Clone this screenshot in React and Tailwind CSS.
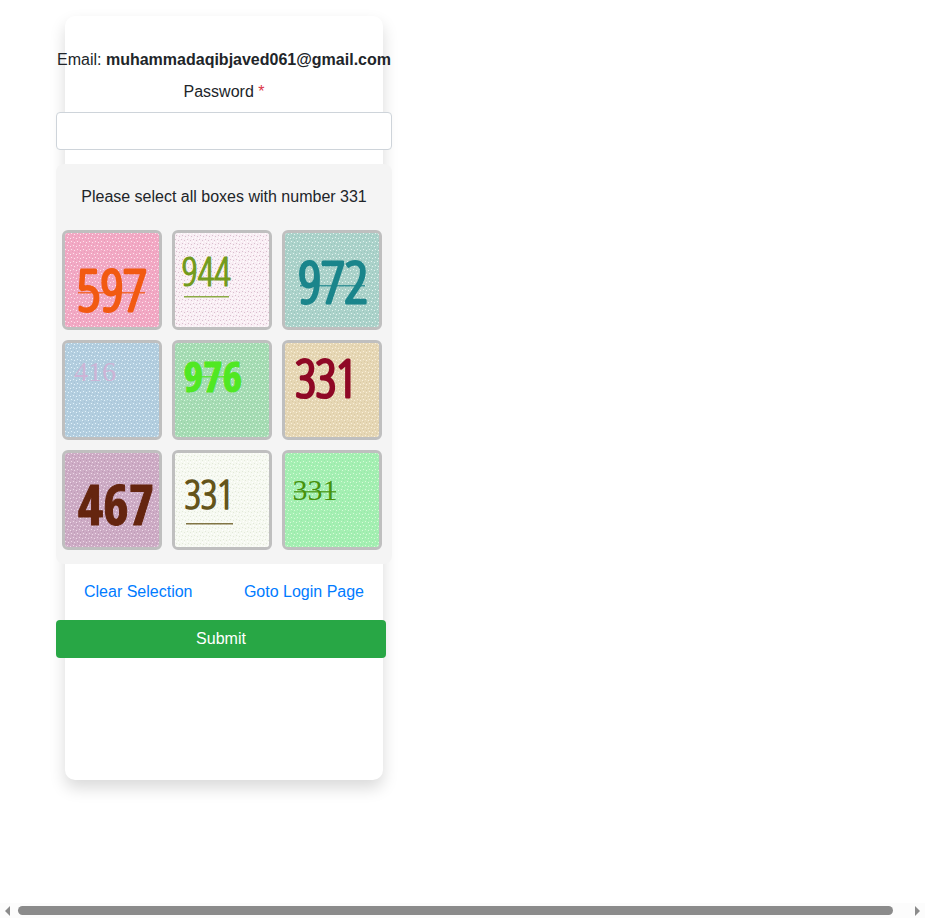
import React, { useState } from "react";

const LIGHT = '"Open Sans Condensed Light", "Roboto Condensed", "Liberation Sans Narrow", "DejaVu Sans Condensed", sans-serif';
const HEAVY = '"Open Sans Condensed", "Liberation Sans Narrow", "DejaVu Sans Condensed", sans-serif';
const SERIF = '"Liberation Serif", serif';

const TILES = [
  { id: "a", value: "597", bg: "#f2a9c4", dot: "#fde3ee", shade: "#e99cbb", ink: "#f25a12", x: 47, y: 78, size: 58, font: LIGHT, weight: 400, stroke: 3, line: [13, 59, 80] },
  { id: "b", value: "944", bg: "#f9eef4", dot: "#ffffff", shade: "#d9bfce", ink: "#739b1c", x: 31, y: 53, size: 41, font: LIGHT, weight: 400, stroke: 1.2, line: [9, 63, 54] },
  { id: "c", value: "972", bg: "#abd2ca", dot: "#e2f3ee", shade: "#9bc6bd", ink: "#1a858b", x: 48, y: 70, size: 58, font: LIGHT, weight: 400, stroke: 3, line: [15, 52, 80] },
  { id: "d", value: "416", bg: "#b3cedf", dot: "#e2f2fb", shade: "#a6c3d8", ink: "#cdb4d6", x: 30, y: 38, size: 28, font: SERIF, weight: 400, stroke: 0 },
  { id: "e", value: "976", bg: "#a6dcb4", dot: "#d9f6e0", shade: "#98d0a8", ink: "#50e822", x: 38, y: 49, size: 42, font: HEAVY, weight: 700, stroke: 1, line: [11, 33, 62] },
  { id: "f", value: "331", bg: "#e6d7b5", dot: "#faf0d9", shade: "#dacaa3", ink: "#8f0825", x: 41, y: 54, size: 51, font: LIGHT, weight: 400, stroke: 3 },
  { id: "g", value: "467", bg: "#cdacc5", dot: "#efd9e9", shade: "#c09ab8", ink: "#65250f", x: 51, y: 72, size: 55, font: HEAVY, weight: 700, stroke: 1 },
  { id: "h", value: "331", bg: "#f6f9f1", dot: "#ffffff", shade: "#e2e8da", ink: "#64541a", x: 34, y: 56, size: 41, font: LIGHT, weight: 400, stroke: 1.6, line: [11, 70, 58] },
  { id: "i", value: "331", bg: "#a4efb2", dot: "#d6fbd8", shade: "#98e8aa", ink: "#46920c", x: 30, y: 47, size: 30, font: SERIF, weight: 400, stroke: 0, line: [9, 38, 51] },
];

function NumberTile({ tile, selected, onToggle }) {
  const patternId = `grain-${tile.id}`;
  return (
    <button
      type="button"
      aria-pressed={selected}
      onClick={onToggle}
      className={`size-[100px] cursor-pointer overflow-hidden rounded-md border-3 ${
        selected ? "border-[#28a745]" : "border-[#bfbfbf]"
      }`}
    >
      <svg viewBox="0 0 94 94" className="block size-full">
        <defs>
          <pattern id={patternId} width="6" height="8" patternUnits="userSpaceOnUse">
            <rect width="6" height="8" fill={tile.bg} />
            <rect x="0" y="0" width="1" height="1" fill={tile.dot} />
            <rect x="3" y="1" width="1" height="1" fill={tile.dot} />
            <rect x="1" y="2" width="1" height="1" fill={tile.shade} />
            <rect x="4" y="3" width="1" height="1" fill={tile.shade} />
            <rect x="2" y="4" width="1" height="1" fill={tile.dot} />
            <rect x="5" y="5" width="1" height="1" fill={tile.dot} />
            <rect x="0" y="6" width="1" height="1" fill={tile.shade} />
            <rect x="3" y="7" width="1" height="1" fill={tile.shade} />
          </pattern>
        </defs>
        <rect width="94" height="94" fill={`url(#${patternId})`} />
        {tile.line && (
          <rect x={tile.line[0]} y={tile.line[1]} width={tile.line[2] - tile.line[0]} height="1.5" fill={tile.ink} opacity="0.8" />
        )}
        <text
          x={tile.x}
          y={tile.y}
          fill={tile.ink}
          stroke={tile.ink}
          strokeWidth={tile.stroke}
          strokeLinejoin="round"
          fontSize={tile.size}
          fontFamily={tile.font}
          fontWeight={tile.weight}
          textAnchor="middle"
        >
          {tile.value}
        </text>
      </svg>
    </button>
  );
}

export default function App() {
  const [selected, setSelected] = useState([]);
  const toggle = (id) =>
    setSelected((list) => (list.includes(id) ? list.filter((v) => v !== id) : [...list, id]));

  return (
    <div className="flex min-h-screen flex-col overflow-hidden bg-white font-['Liberation_Sans',Arial,sans-serif] text-base text-[#212529]">
      <main className="flex-1 px-[65px] pt-4">
        <div className="w-[318px] rounded-[10px] bg-white pt-8 pb-[122px] shadow-[0_8px_16px_rgba(0,0,0,0.15)]">
          <form className="-mx-[9px]" onSubmit={(e) => e.preventDefault()}>
            <p className="text-center whitespace-nowrap">
              Email: <strong className="font-bold">muhammadaqibjaved061@gmail.com</strong>
            </p>
            <label htmlFor="password" className="mt-2 block text-center">
              Password <span className="text-[#dc3545]">*</span>
            </label>
            <input
              id="password"
              type="password"
              className="mt-2 block h-[38px] w-full rounded border border-[#ced4da] bg-white px-3"
            />

            <section className="mt-3.5 rounded-lg bg-[#f4f4f4] pt-[21px] pr-2.5 pb-3.5 pl-1.5">
              <p className="pl-1 text-center">Please select all boxes with number 331</p>
              <div className="mt-[21px] grid grid-cols-3 gap-2.5">
                {TILES.map((tile) => (
                  <NumberTile
                    key={tile.id}
                    tile={tile}
                    selected={selected.includes(tile.id)}
                    onToggle={() => toggle(tile.id)}
                  />
                ))}
              </div>
            </section>

            <div className="mt-4 flex justify-between px-7 text-[#007bff]">
              <a href="#clear" onClick={() => setSelected([])}>Clear Selection</a>
              <a href="#login">Goto Login Page</a>
            </div>
            <div className="mt-4 pr-1.5">
              <button type="submit" className="block h-[38px] w-full rounded bg-[#28a745] text-white">
                Submit
              </button>
            </div>
          </form>
        </div>
      </main>

      <div className="flex h-[15px] items-center gap-2 bg-[#fcfcfc] px-1">
        <svg viewBox="0 0 6 10" className="h-2.5 w-1.5 shrink-0" fill="#8b8b8b">
          <path d="M6 0v10L1 5z" />
        </svg>
        <div className="mr-3.5 h-[9px] flex-1 rounded-full bg-[#8b8b8b]" />
        <svg viewBox="0 0 6 10" className="h-2.5 w-1.5 shrink-0" fill="#8b8b8b">
          <path d="M0 0v10l5-5z" />
        </svg>
      </div>
    </div>
  );
}
